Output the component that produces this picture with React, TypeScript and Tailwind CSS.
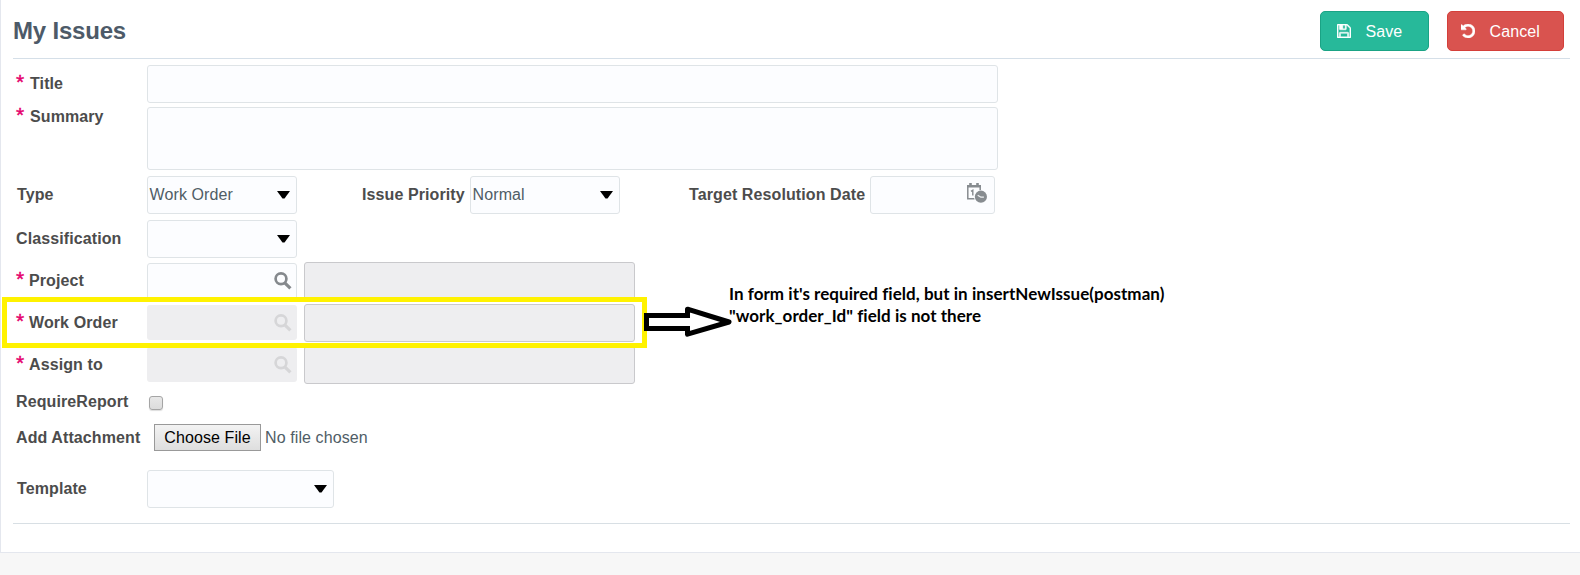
import type { ReactNode } from 'react';

function SaveIcon() {
  return (
    <svg viewBox="128 128 1536 1536" className="h-[14px] w-[14px]" fill="currentColor" stroke="currentColor" strokeWidth="50">
      <path d="M512 1536h768v-384h-768v384zm896 0h128v-896q0-14-10-38.5t-20-34.5l-281-281q-10-10-34-20t-39-10v416q0 40-28 68t-68 28h-576q-40 0-68-28t-28-68v-416h-128v1280h128v-416q0-40 28-68t68-28h832q40 0 68 28t28 68v416zm-384-928v-320q0-13-9.5-22.5t-22.5-9.5h-192q-13 0-22.5 9.5t-9.5 22.5v320q0 13 9.5 22.5t22.5 9.5h192q13 0 22.5-9.5t9.5-22.5zm640 32v928q0 40-28 68t-68 28h-1344q-40 0-68-28t-28-68v-1344q0-40 28-68t68-28h928q40 0 88 20t76 48l280 280q28 28 48 76t20 88z" />
    </svg>
  );
}

function UndoIcon() {
  return (
    <svg viewBox="128 128 1536 1536" className="h-[14px] w-[14px]" fill="currentColor" stroke="currentColor" strokeWidth="50">
      <path d="M1664 896q0 156-61 298t-164 245-245 164-298 61q-172 0-327-72.5t-264-204.5q-7-10-6.5-22.5t8.5-20.5l137-138q10-9 25-9 16 2 23 12 73 95 179 147t225 52q104 0 198.5-40.5t163.5-109.5 109.5-163.5 40.5-198.5-40.5-198.5-109.5-163.5-163.5-109.5-198.5-40.5q-98 0-188 35.5t-160 101.5l137 138q31 30 14 69-17 40-59 40h-448q-26 0-45-19t-19-45v-448q0-42 40-59 39-17 69 14l130 129q107-101 244.5-156.5t284.5-55.5q156 0 298 61t245 164 164 245 61 298z" />
    </svg>
  );
}

function SearchIcon({ className }: { className: string }) {
  return (
    <svg viewBox="0 0 18 18" className={`h-[18px] w-[18px] ${className}`} fill="none" stroke="currentColor">
      <circle cx="7" cy="6.8" r="5.4" strokeWidth="2.7" />
      <path d="M10.8 10.8l5.6 5.6" strokeWidth="3.2" />
    </svg>
  );
}

function CalendarIcon() {
  return (
    <svg viewBox="0 0 20 20" className="h-5 w-5 text-[#878c90]">
      <path d="M0 2h2.2V0h2.6v2h4.4V0h2.6v2H14v2.6H0z" fill="currentColor" />
      <path d="M0.8 4v11.7H7.5M13.2 4v4" fill="none" stroke="currentColor" strokeWidth="1.5" />
      <path d="M4 8.4l1.8-1.2V12.6" fill="none" stroke="currentColor" strokeWidth="1.4" />
      <circle cx="13.9" cy="13.7" r="6.6" fill="#fcfdff" />
      <circle cx="13.9" cy="13.7" r="6.1" fill="currentColor" />
      <path d="M10.7 12.2l3.2 2h3" fill="none" stroke="#eef0f2" strokeWidth="1.3" />
    </svg>
  );
}

function Label({ children, required, className }: { children: ReactNode; required?: boolean; className: string }) {
  return (
    <div className={`flex shrink-0 leading-[18px] font-bold tracking-[0.1px] whitespace-nowrap text-[#4c4c4c] ${className}`}>
      {required && (
        <span className="-mt-[2px] w-[13px] shrink-0 text-[21px] font-normal tracking-normal text-[#e5006d] [-webkit-text-stroke:0.4px_#e5006d]">*</span>
      )}
      <span>{children}</span>
    </div>
  );
}

function Select({ value, className }: { value?: string; className: string }) {
  return (
    <div className={`flex h-[38px] items-center justify-between rounded-[3px] border border-[#dfe4e7] bg-[#fcfdff] pr-[6.5px] pl-[1.6px] text-[#505d66] ${className}`}>
      <span className="leading-[18px] tracking-[0.1px]">{value}</span>
      <svg viewBox="0 0 13 8" className="h-2 w-[13px]">
        <path d="M0 0h13L7.5 7.6h-2z" fill="#000" />
      </svg>
    </div>
  );
}

function Lookup({ label, disabled, className }: { label: string; disabled?: boolean; className: string }) {
  return (
    <div className={`flex h-[38px] ${className}`}>
      <Label required className="w-[134px] pt-[10px] pl-[3px]">{label}</Label>
      {disabled ? (
        <div className="mt-px flex h-[35px] w-[150px] justify-end rounded-[3px] bg-[#eeeef0] pt-[9px] pr-[5px]">
          <SearchIcon className="text-[#d6d6d8]" />
        </div>
      ) : (
        <div className="mt-px flex h-[37px] w-[150px] justify-end rounded-[3px] border border-[#dfe4e7] bg-[#fcfdff] pt-[8px] pr-[4px]">
          <SearchIcon className="text-[#85898d]" />
        </div>
      )}
      <div className="ml-[7px] h-[38px] w-[331px] rounded-[3px] border border-[#c9c9cc] bg-[#eeeef0]" />
    </div>
  );
}

export default function App() {
  return (
    <div className="relative h-[575px] w-[1580px] overflow-hidden bg-[#f7f7f7] font-['Liberation_Sans',Arial,sans-serif] text-[16px]">
      <div className="flex h-[553px] flex-col border-b border-l border-[#e4e7ee] bg-white pl-3">
        <header className="flex h-[59px] w-[1557px] shrink-0 justify-between border-b border-[#d5dfe8]">
          <h1 className="pt-[17px] text-[24px] leading-[28px] font-bold tracking-[-0.2px] text-[#4d5a68]">My Issues</h1>
          <div className="flex gap-[18px] pt-[11px] pr-[6px] text-white">
            <button className="flex h-10 w-[109px] items-center rounded-[5px] border border-[#1aa385] bg-[#27b99a] pl-[16px]">
              <SaveIcon />
              <span className="mt-[2px] ml-[14.5px] tracking-[0.1px]">Save</span>
            </button>
            <button className="flex h-10 w-[117px] items-center rounded-[5px] border border-[#d43f3a] bg-[#d9534f] pl-[13px]">
              <UndoIcon />
              <span className="mt-[2px] ml-[14.5px] tracking-[0.1px]">Cancel</span>
            </button>
          </div>
        </header>

        <div className="mt-[6px] flex h-[38px]">
          <Label required className="w-[134px] pt-[10px] pl-[3px]"><span className="ml-[1px]">Title</span></Label>
          <div className="h-[38px] w-[851px] rounded-[3px] border border-[#dfe4e7] bg-[#fcfdff]" />
        </div>
        <div className="mt-1 flex h-[63px]">
          <Label required className="w-[134px] pt-px pl-[3px]"><span className="ml-[1px]">Summary</span></Label>
          <div className="h-[63px] w-[851px] rounded-[3px] border border-[#dfe4e7] bg-[#fcfdff]" />
        </div>
        <div className="mt-[6px] flex h-[38px]">
          <Label className="w-[134px] pt-[10px] pl-[4px]">Type</Label>
          <Select value="Work Order" className="w-[150px]" />
          <Label className="ml-[65px] w-[108px] pt-[10px]">Issue Priority</Label>
          <Select value="Normal" className="w-[150px]" />
          <Label className="ml-[69px] w-[181px] pt-[10px]">Target Resolution Date</Label>
          <div className="flex h-[38px] w-[125px] justify-end rounded-[3px] border border-[#dfe4e7] bg-[#fcfdff] pt-[6px] pr-[7px]">
            <CalendarIcon />
          </div>
        </div>
        <div className="mt-[6px] flex h-[38px]">
          <Label className="w-[134px] pt-[10px] pl-[3px]">Classification</Label>
          <Select className="w-[150px]" />
        </div>
        <Lookup label="Project" className="mt-1" />
        <Lookup label="Work Order" disabled className="mt-1" />
        <Lookup label="Assign to" disabled className="mt-1" />
        <div className="mt-2 flex h-[18px]">
          <Label className="w-[134px] pt-px pl-[3px]">RequireReport</Label>
          <span className="mt-1 ml-[2px] h-[14px] w-[14px] rounded-[3px] border border-[#a5a5a5] bg-linear-to-b from-[#e8e8e8] to-[#dcdcdc] shadow-[0_1px_1px_#ddd]" />
        </div>
        <div className="mt-[14px] flex h-[27px] items-center">
          <Label className="w-[134px] pl-[3px]">Add Attachment</Label>
          <button className="ml-[7px] h-[27px] w-[107px] border border-[#999] bg-linear-to-b from-[#f3f3f3] to-[#dedede] leading-[18px] tracking-[0.1px] text-black">Choose File</button>
          <span className="ml-1 leading-[18px] tracking-[0.1px] text-[#505d66]">No file chosen</span>
        </div>
        <div className="mt-[19px] flex h-[38px]">
          <Label className="w-[134px] pt-[10px] pl-[4px]">Template</Label>
          <Select className="w-[187px]" />
        </div>
        <div className="mt-[15px] h-px w-[1557px] bg-[#d8dfe4]" />
      </div>

      <div className="absolute top-[297px] left-[2px] h-[51px] w-[645px] border-[5px] border-[#fff200]" />
      <svg className="absolute top-[300px] left-[640px] h-[45px] w-[100px]" viewBox="640 300 100 45">
        <path d="M688 315.5H646.5V328.5H688" fill="#fff" stroke="#000" strokeWidth="5" />
        <path d="M687.5 318V309.2L729 322L687.5 334.2V326" fill="#fff" stroke="#000" strokeWidth="5" strokeLinejoin="round" />
      </svg>
      <p className="absolute top-[283px] left-[729px] font-['Lato',sans-serif] text-[17px] leading-[22px] font-bold tracking-[0.04px] whitespace-nowrap text-black">
        In form it's required field, but in insertNewIssue(postman)
        <br />
        "work_order_Id" field is not there
      </p>
    </div>
  );
}
